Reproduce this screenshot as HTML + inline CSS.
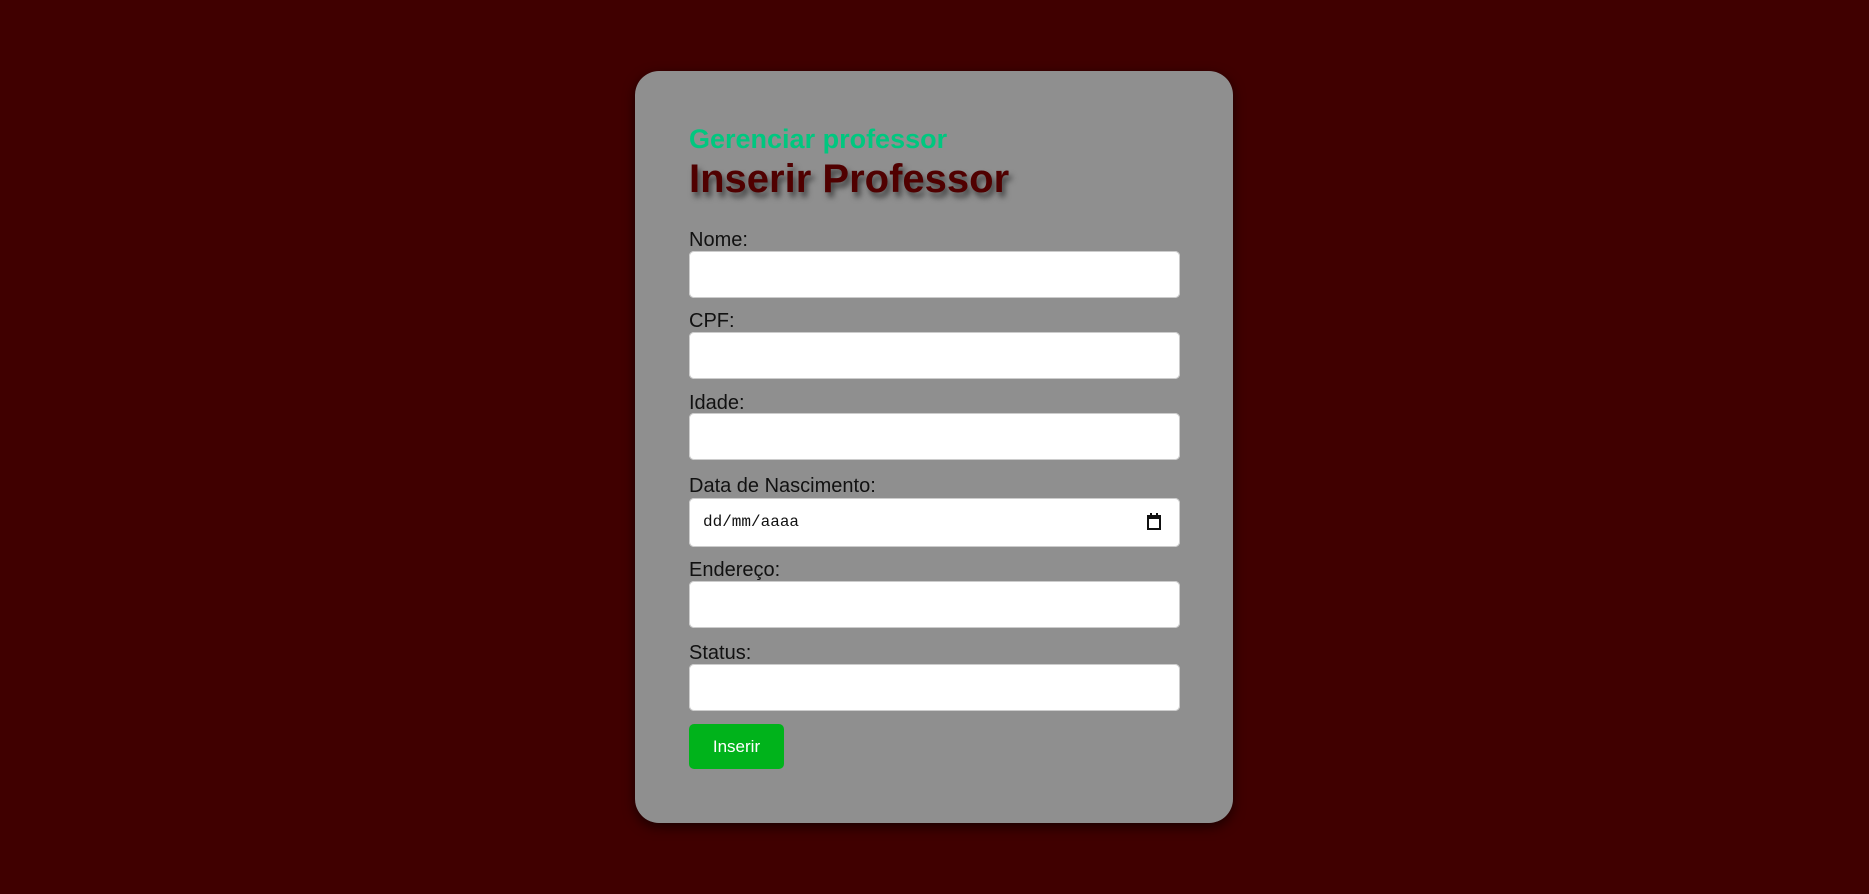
<!DOCTYPE html>
<html><head><meta charset="utf-8"><style>
html,body{margin:0;padding:0;width:1869px;height:894px;background:#400000;overflow:hidden;font-family:"Liberation Sans",Arial,sans-serif}
.card{position:absolute;left:635px;top:71px;width:598px;height:752px;background:#8f8f8f;border-radius:24px;box-shadow:0 4px 12px rgba(0,0,0,.6)}
.a{position:absolute;left:54px;white-space:nowrap}
.h3{font-size:27px;font-weight:bold;color:#00c77f;top:53px}
.h1{font-size:40px;font-weight:bold;color:#500000;top:86px;text-shadow:3px 5px 6px rgba(0,0,0,.55)}
.lab{font-size:20px;color:#111}
.inp{width:491px;height:47px;background:#fff;border-radius:5px;box-shadow:0 0 0 1px #ccc inset}
.btn{width:95px;height:45px;background:#00b31b;border-radius:5px;color:#fff;font-size:17px;line-height:45px;text-align:center}
</style></head><body>
<div class="card">
<div class="a h3">Gerenciar professor</div>
<div class="a h1">Inserir Professor</div>
<div class="a lab" style="top:158px">Nome:</div>
<div class="a inp" style="top:180px"></div>
<div class="a lab" style="top:239px">CPF:</div>
<div class="a inp" style="top:261px"></div>
<div class="a lab" style="top:321px">Idade:</div>
<div class="a inp" style="top:342px"></div>
<div class="a lab" style="top:404px">Data de Nascimento:</div>
<div class="a inp" style="top:427px;height:49px">
<span style="position:absolute;left:14px;top:15px;font-family:'Liberation Mono',monospace;font-size:16px;color:#111">dd/mm/aaaa</span>
<svg style="position:absolute;left:457px;top:15px" width="16" height="18" viewBox="0 0 16 18"><rect x="2" y="3" width="12" height="13" fill="none" stroke="#111" stroke-width="2"/><rect x="2" y="3" width="12" height="3" fill="#111"/><rect x="4" y="0" width="2" height="4" fill="#111"/><rect x="10" y="0" width="2" height="4" fill="#111"/></svg>
</div>
<div class="a lab" style="top:488px">Endereço:</div>
<div class="a inp" style="top:510px"></div>
<div class="a lab" style="top:571px">Status:</div>
<div class="a inp" style="top:593px"></div>
<div class="a btn" style="top:653px">Inserir</div>
</div>
</body></html>
